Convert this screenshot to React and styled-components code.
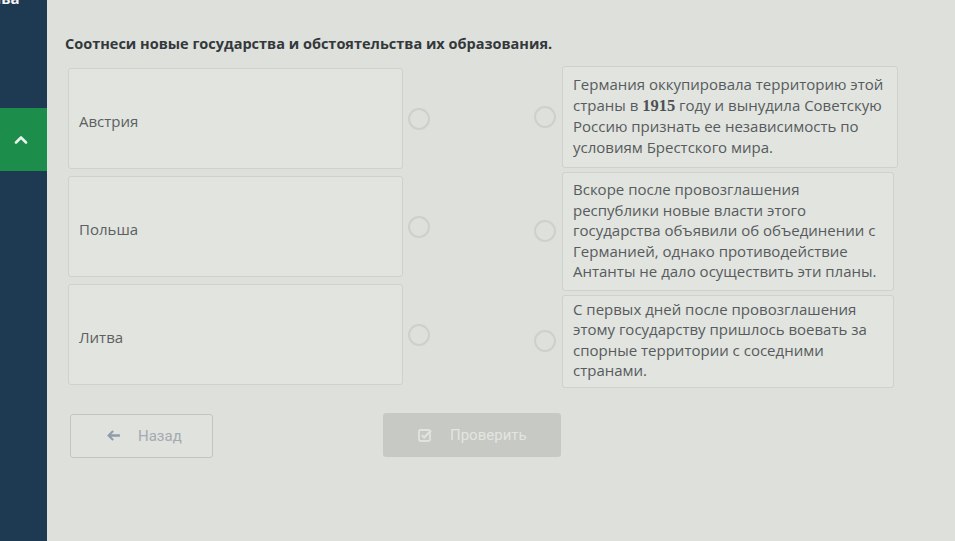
import React from "react";
import styled, { createGlobalStyle } from "styled-components";

const Global = createGlobalStyle`
  html, body { margin: 0; padding: 0; background: #dde0db; }
  body { font-family: "Open Sans", "Liberation Sans", sans-serif; }
  #root { height: 541px; overflow: hidden; }
`;

const Page = styled.div`
  display: flex;
  height: 541px;
  background: #dde0db;
`;

const Sidebar = styled.aside`
  width: 47px;
  flex: none;
  background: #1e3a52;
  display: flex;
  flex-direction: column;
  overflow: hidden;
`;

const SideTitle = styled.div`
  color: #f3f5f7;
  font-weight: 700;
  font-size: 15px;
  line-height: 16px;
  margin-top: -10px;
  white-space: nowrap;
  margin-left: -26px;
`;

const SideToggle = styled.div`
  margin-top: 102px;
  height: 63px;
  background: #1d8d4c;
  display: flex;
  align-items: center;
  justify-content: center;
  padding-right: 6px;
`;

const Main = styled.main`
  flex: 1;
  padding: 34px 0 0 18px;
`;

const Title = styled.h1`
  margin: 0 0 12px 0;
  font-size: 14.5px;
  font-weight: 700;
  color: #34383b;
  line-height: 20px;
`;

const Board = styled.div`
  display: flex;
  align-items: flex-start;
  gap: 104px;
  padding-left: 3px;
`;

const Column = styled.div`
  display: flex;
  flex-direction: column;
  gap: ${(p) => p.$gap}px;
  margin-top: ${(p) => p.$offset || 0}px;
`;

const Item = styled.div`
  display: flex;
  align-items: center;
  gap: ${(p) => p.$gap}px;
`;

const Card = styled.div`
  box-sizing: border-box;
  width: ${(p) => p.$w}px;
  min-height: ${(p) => p.$h || 0}px;
  border: 1px solid #ced1cc;
  border-radius: 3px;
  background: #e1e4df;
  color: ${(p) => (p.$center ? "#5c6062" : "#575b5d")};
  font-size: 15px;
  line-height: 20.5px;
  padding: ${(p) => p.$pad};
  display: flex;
  align-items: ${(p) => (p.$center ? "center" : "flex-start")};
  white-space: nowrap;
`;

const Dot = styled.span`
  box-sizing: border-box;
  width: 22px;
  height: 22px;
  flex: none;
  border-radius: 50%;
  border: 2px solid #cdd0cb;
`;

const Year = styled.span`
  font-family: "Liberation Serif", "DejaVu Serif", serif;
  font-size: 16.5px;
  font-weight: 700;
  color: #4d5153;
`;

const Actions = styled.div`
  display: flex;
  gap: 170px;
  margin-top: 26px;
  padding-left: 5px;
  align-items: flex-start;
`;

const Button = styled.div`
  box-sizing: border-box;
  width: ${(p) => p.$w}px;
  height: 44px;
  border-radius: 3px;
  display: flex;
  align-items: center;
  padding-left: ${(p) => p.$pl}px;
  gap: ${(p) => p.$gap}px;
  font-family: Roboto, "Liberation Sans", sans-serif;
  font-size: 15px;
  ${(p) =>
    p.$primary
      ? `background: #c7c9c5; color: #e3e5e1; margin-top: -1px;`
      : `background: #dfe2dd; border: 1px solid #c2c5c0; color: #a4aab1;`}
`;

const Chevron = () => (
  <svg width="14" height="9" viewBox="0 0 14 9">
    <path d="M2 7.5 L7 2.5 L12 7.5" fill="none" stroke="#e8f3ec" strokeWidth="2.6" strokeLinecap="round" strokeLinejoin="round" />
  </svg>
);

const ArrowLeft = () => (
  <svg width="15" height="13" viewBox="0 0 14 12">
    <path d="M6 1 L1 6 L6 11 L7.4 9.6 L4.8 7.1 H13 V4.9 H4.8 L7.4 2.4 Z" fill="#8f9cab" />
  </svg>
);

const CheckSquare = () => (
  <svg width="14" height="14" viewBox="0 0 14 14">
    <rect x="1" y="2" width="11" height="11" rx="1.5" fill="none" stroke="#e1e3df" strokeWidth="1.8" />
    <path d="M3.8 7.2 L6.2 9.5 L13 2.5" fill="none" stroke="#e1e3df" strokeWidth="2" />
  </svg>
);

const left = ["Австрия", "Польша", "Литва"];

const Lines = ({ lines }) => (
  <div>
    {lines.map((l, i) => (
      <div key={i}>{l}</div>
    ))}
  </div>
);

export default function App() {
  return (
    <>
      <Global />
      <Page>
        <Sidebar>
          <SideTitle>Глава</SideTitle>
          <SideToggle>
            <Chevron />
          </SideToggle>
        </Sidebar>
        <Main>
          <Title>Соотнеси новые государства и обстоятельства их образования.</Title>
          <Board>
            <Column $gap={7} $offset={2}>
              {left.map((t) => (
                <Item key={t} $gap={5}>
                  <Card $w={335} $h={101} $pad="6px 10px 0" $center>
                    {t}
                  </Card>
                  <Dot />
                </Item>
              ))}
            </Column>
            <Column $gap={4}>
              <Item $gap={6}>
                <Dot />
                <Card $w={336} $pad="7px 10px 10px">
                  <Lines
                    lines={[
                      "Германия оккупировала территорию этой",
                      <>
                        страны в <Year>1915</Year> году и вынудила Советскую
                      </>,
                      "Россию признать ее независимость по",
                      "условиям Брестского мира.",
                    ]}
                  />
                </Card>
              </Item>
              <Item $gap={6}>
                <Dot />
                <Card $w={332} $pad="6px 10px 8px">
                  <Lines
                    lines={[
                      "Вскоре после провозглашения",
                      "республики новые власти этого",
                      "государства объявили об объединении с",
                      "Германией, однако противодействие",
                      "Антанты не дало осуществить эти планы.",
                    ]}
                  />
                </Card>
              </Item>
              <Item $gap={6}>
                <Dot />
                <Card $w={332} $pad="3px 10px 6px">
                  <Lines
                    lines={[
                      "С первых дней после провозглашения",
                      "этому государству пришлось воевать за",
                      "спорные территории с соседними",
                      "странами.",
                    ]}
                  />
                </Card>
              </Item>
            </Column>
          </Board>
          <Actions>
            <Button $w={143} $pl={35} $gap={17}>
              <ArrowLeft />
              Назад
            </Button>
            <Button $w={178} $pl={35} $gap={18} $primary>
              <CheckSquare />
              Проверить
            </Button>
          </Actions>
        </Main>
      </Page>
    </>
  );
}
